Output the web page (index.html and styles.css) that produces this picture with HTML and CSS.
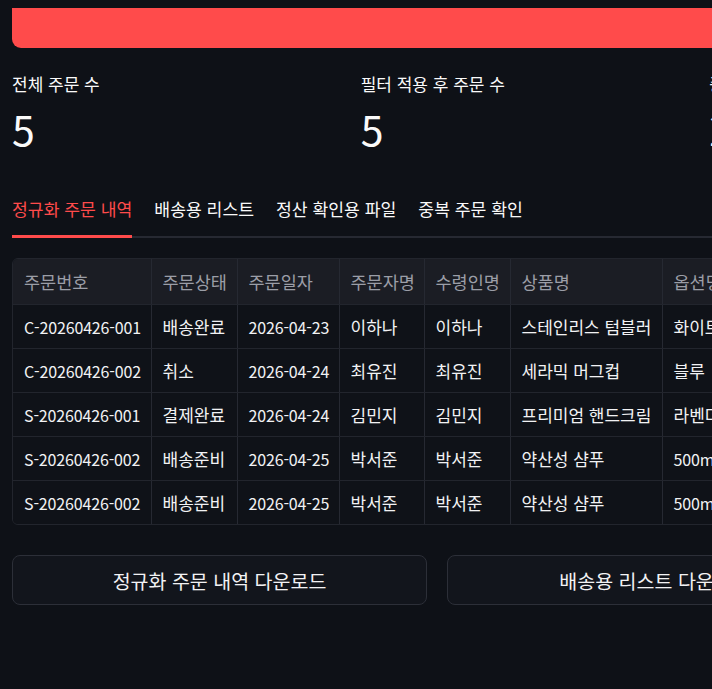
FILE: index.html
```html
<!DOCTYPE html>
<html lang="ko">
<head>
<meta charset="utf-8">
<title>주문 정리</title>
<link rel="stylesheet" href="styles.css">
</head>
<body>
<div class="page">
  <div class="banner"></div>

  <div class="metrics">
    <div class="metric">
      <div class="metric-label">전체 주문 수</div>
      <div class="metric-value">5</div>
    </div>
    <div class="metric">
      <div class="metric-label">필터 적용 후 주문 수</div>
      <div class="metric-value">5</div>
    </div>
    <div class="metric">
      <div class="metric-label">중복 의심 주문 수</div>
      <div class="metric-value">2</div>
    </div>
  </div>

  <div class="tabs">
    <div class="tab active">정규화 주문 내역</div>
    <div class="tab">배송용 리스트</div>
    <div class="tab">정산 확인용 파일</div>
    <div class="tab">중복 주문 확인</div>
  </div>

  <div class="table-wrap">
    <table class="grid">
      <colgroup>
        <col class="c1"><col class="c2"><col class="c3"><col class="c4">
        <col class="c5"><col class="c6"><col class="c7"><col class="c8">
      </colgroup>
      <thead>
        <tr>
          <th>주문번호</th>
          <th>주문상태</th>
          <th>주문일자</th>
          <th>주문자명</th>
          <th>수령인명</th>
          <th>상품명</th>
          <th>옵션명</th>
          <th>수량</th>
        </tr>
      </thead>
      <tbody>
        <tr><td class="lat">C-20260426-001</td><td>배송완료</td><td class="lat">2026-04-23</td><td>이하나</td><td>이하나</td><td>스테인리스 텀블러</td><td>화이트</td><td class="lat">1</td></tr>
        <tr><td class="lat">C-20260426-002</td><td>취소</td><td class="lat">2026-04-24</td><td>최유진</td><td>최유진</td><td>세라믹 머그컵</td><td>블루</td><td class="lat">1</td></tr>
        <tr><td class="lat">S-20260426-001</td><td>결제완료</td><td class="lat">2026-04-24</td><td>김민지</td><td>김민지</td><td>프리미엄 핸드크림</td><td>라벤더</td><td class="lat">2</td></tr>
        <tr><td class="lat">S-20260426-002</td><td>배송준비</td><td class="lat">2026-04-25</td><td>박서준</td><td>박서준</td><td>약산성 샴푸</td><td class="lat">500ml</td><td class="lat">1</td></tr>
        <tr><td class="lat">S-20260426-002</td><td>배송준비</td><td class="lat">2026-04-25</td><td>박서준</td><td>박서준</td><td>약산성 샴푸</td><td class="lat">500ml</td><td class="lat">1</td></tr>
      </tbody>
    </table>
  </div>

  <div class="downloads">
    <button class="btn">정규화 주문 내역 다운로드</button>
    <button class="btn">배송용 리스트 다운로드</button>
    <button class="btn">정산 확인용 파일 다운로드</button>
  </div>
</div>
</body>
</html>
```

FILE: styles.css
```css
html, body {
  margin: 0;
  padding: 0;
  background: #0e1117;
  overflow: hidden;
}

body {
  font-family: "Noto Sans CJK KR", "Noto Sans", sans-serif;
  color: #fafafa;
  width: 712px;
  height: 689px;
}

.page {
  width: 1400px;
  padding: 8px 0 0 12px;
  box-sizing: border-box;
}

.banner {
  height: 40px;
  width: 1200px;
  background: #ff4b4b;
  border-radius: 0 0 0 9px;
}

.metrics {
  display: flex;
  gap: 16px;
  width: 1030px;
  margin-top: 24px;
}

.metric {
  flex: 1;
}

.metric-label {
  font-size: 17px;
  line-height: 24px;
  height: 24px;
}

.metric-value {
  font-size: 41px;
  line-height: 52px;
  margin-top: 6px;
}

.tabs {
  display: flex;
  gap: 22px;
  width: 1300px;
  margin-top: 43px;
  border-bottom: 2px solid #262932;
}

.tab {
  font-size: 17.2px;
  line-height: 24px;
  padding: 0 0 14px;
  margin-bottom: -2px;
  border-bottom: 3px solid transparent;
}

.tab.active {
  color: #ff4b4b;
  border-bottom-color: #ff4b4b;
}

.table-wrap {
  margin-top: 20px;
  width: max-content;
  border: 1px solid #22252d;
  border-radius: 6px;
  overflow: hidden;
}

.grid {
  border-collapse: collapse;
  table-layout: fixed;
  width: 849px;
  font-size: 17px;
}

.grid th,
.grid td {
  text-align: left;
  padding: 0 11px;
  border-right: 1px solid #262932;
  border-bottom: 1px solid #22252d;
  white-space: nowrap;
  overflow: hidden;
}

.grid th {
  height: 45px;
  background: #1b1d24;
  color: #9b9ea7;
  font-weight: 400;
  font-size: 17.5px;
}

.grid td {
  height: 43px;
  background: #0f1218;
  color: #f2f2f4;
}

.grid td.lat {
  font-size: 16px;
  letter-spacing: -0.15px;
}

.grid tbody tr:last-child td {
  border-bottom: none;
}

.c1 { width: 138px; }
.c2 { width: 86px; }
.c3 { width: 102px; }
.c4 { width: 85px; }
.c5 { width: 86px; }
.c6 { width: 152px; }
.c7 { width: 110px; }
.c8 { width: 90px; }

.downloads {
  display: flex;
  gap: 20px;
  margin-top: 30px;
}

.btn {
  width: 415px;
  height: 50px;
  flex: none;
  background: #12151c;
  border: 1px solid #2c2f38;
  border-radius: 8px;
  color: #f2f2f4;
  font-family: "Noto Sans CJK KR", "Noto Sans", sans-serif;
  font-size: 19.5px;
}
```
